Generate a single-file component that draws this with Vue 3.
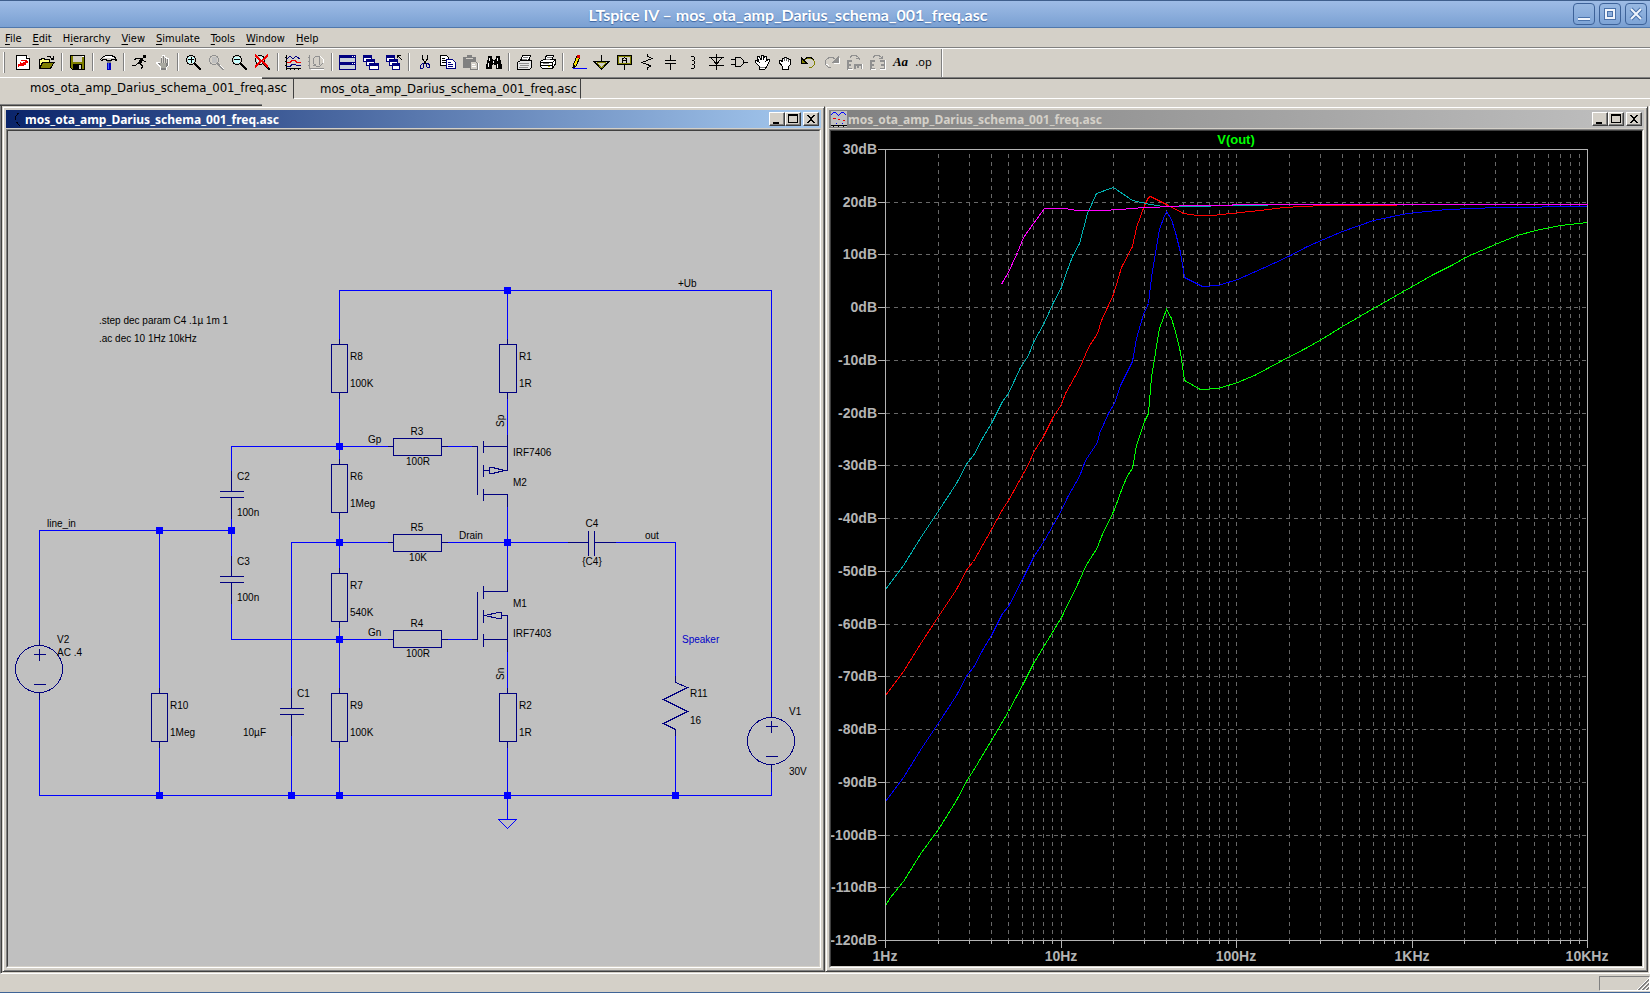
<template>
  <div class="app">
    <!-- Main window title -->
    <header class="titlebar">
      <h1 class="app-title">LTspice IV – mos_ota_amp_Darius_schema_001_freq.asc</h1>
      <div class="wm-buttons">
        <button v-for="b in wmButtons" :key="b.name" class="wm-btn" :aria-label="b.name">
          <svg viewBox="0 0 20 20" width="20" height="20">
            <path :d="b.d" class="wm-edge" />
            <path :d="b.d" class="wm-glyph" />
          </svg>
        </button>
      </div>
    </header>

    <!-- Menu -->
    <nav class="menubar">
      <button v-for="m in menus" :key="m.key + m.post" class="menu-item">{{ m.pre }}<u>{{ m.key }}</u>{{ m.post }}</button>
    </nav>

    <!-- Toolbar -->
    <div class="toolbar" role="toolbar">
      <span class="grip"></span>
      <div v-for="(group, gi) in toolGroups" :key="gi" class="tool-group">
        <button v-for="t in group" :key="t" class="tool" :aria-label="t">
          <span v-if="t === 'Text'" class="tool-text">Aa</span>
          <span v-else-if="t === 'SPICE directive'" class="tool-op">.op</span>
          <svg v-else viewBox="0 0 17 16" width="17" height="16" shape-rendering="crispEdges">
            <path
              v-for="(p, i) in icons[t]"
              :key="i"
              :d="p[0]"
              :fill="p[1] || 'none'"
              :stroke="p[2] || 'none'"
              :stroke-width="p[3] || 1"
            />
          </svg>
        </button>
      </div>
    </div>

    <!-- Document tabs -->
    <div class="tabs-edge"><span></span></div>
    <div class="tabs" role="tablist">
      <button
        v-for="(tab, i) in tabs"
        :key="i"
        class="tab"
        :class="{ active: i === activeTab }"
        role="tab"
        :aria-selected="i === activeTab"
        @click="activeTab = i"
      >
        {{ tab }}
      </button>
      <span class="tabs-rest"></span>
    </div>
    <div class="mdi-edge"><span></span></div>

    <!-- Child windows -->
    <main class="mdi">
      <section v-for="w in windows" :key="w.kind" class="child">
        <div class="child-title" :class="w.kind">
          <svg class="child-icon" viewBox="0 0 16 16" width="16" height="16" shape-rendering="crispEdges">
            <path
              v-for="(p, i) in icons[w.kind]"
              :key="i"
              :d="p[0]"
              :fill="p[1] || 'none'"
              :stroke="p[2] || 'none'"
            />
          </svg>
          <h2 class="child-name">{{ w.title }}</h2>
          <button v-for="b in childButtons" :key="b.name" class="child-btn" :class="b.name" :aria-label="b.name">
            <svg viewBox="0 0 12 10" width="12" height="10" shape-rendering="crispEdges">
              <path :d="b.d" />
            </svg>
          </button>
        </div>

        <div class="client">
          <!-- Schematic -->
          <svg v-if="w.kind === 'schematic'" class="canvas" viewBox="8 131 811 835" preserveAspectRatio="xMinYMin meet">
            <g transform="translate(0.5 0.5)" shape-rendering="crispEdges" fill="none">
              <path v-for="d in wires" :key="d" :d="d" class="wire" />
              <path v-for="d in symbols" :key="d" :d="d" class="symbol" />
              <rect
                v-for="(r, i) in resistors"
                :key="i"
                :x="r[0]"
                :y="r[1]"
                :width="r[2]"
                :height="r[3]"
                class="symbol"
              />
              <circle cx="38.5" cy="668.5" r="23.5" class="symbol" />
              <circle cx="770.5" cy="740.5" r="23.5" class="symbol" />
            </g>
            <rect
              v-for="(n, i) in nodes"
              :key="i"
              :x="n[0] - 3"
              :y="n[1] - 3"
              width="7"
              height="7"
              class="node"
            />
            <text v-for="(l, i) in labels" :key="i" :x="l[0]" :y="l[1]" class="label">{{ l[2] }}</text>
            <text v-for="(l, i) in centredLabels" :key="i" :x="l[0]" :y="l[1]" class="label mid">{{ l[2] }}</text>
            <text class="label" transform="translate(504 427) rotate(-90)">Sp</text>
            <text class="label" transform="translate(504 680) rotate(-90)">Sn</text>
            <text x="682" y="643" class="label comment">Speaker</text>
          </svg>

          <!-- Waveform plot -->
          <svg v-else class="canvas plot" viewBox="831 131 811 835" preserveAspectRatio="xMinYMin meet">
            <g transform="translate(0.5 0.5)" shape-rendering="crispEdges" fill="none">
              <path v-for="x in minorX" :key="'v' + x" :d="`M${x} 149V940`" class="grid vertical" />
              <path v-for="y in gridY" :key="'h' + y" :d="`M885 ${y}H1587`" class="grid" />
              <path v-for="x in minorX" :key="'t' + x" :d="`M${x} 940v3`" class="axis" />
              <path v-for="l in xLabels" :key="l.text" :d="`M${l.x} 940v7`" class="axis" />
              <path v-for="l in yLabels" :key="l.text" :d="`M877 ${l.y}h8`" class="axis" />
              <path d="M885 149H1587V940H885Z" class="axis" />
              <polyline v-for="t in traces" :key="t.color" :points="t.points" :stroke="t.color" />
            </g>
            <text v-for="l in yLabels" :key="l.text" x="877" :y="l.y + 5" class="tick end">{{ l.text }}</text>
            <text v-for="l in xLabels" :key="l.text" :x="l.x" y="961" class="tick mid">{{ l.text }}</text>
            <text x="1236" y="144" class="trace-name mid">V(out)</text>
          </svg>
        </div>
      </section>
    </main>

    <footer class="statusbar">
      <div class="status-pane">
        <svg viewBox="0 0 12 12" width="12" height="12">
          <path d="M0 12L12 0M4 12L12 4M8 12L12 8" stroke="#fff" fill="none" />
          <path d="M1 12L12 1M2 12L12 2M5 12L12 5M6 12L12 6M9 12L12 9M10 12L12 10" stroke="#808080" fill="none" />
        </svg>
      </div>
    </footer>
  </div>
</template>

<script setup>
import { ref } from 'vue'

const fileName = 'mos_ota_amp_Darius_schema_001_freq.asc'

const tabs = [fileName, fileName]
const activeTab = ref(0)

const windows = [
  { kind: 'schematic', title: fileName },
  { kind: 'waveform', title: fileName }
]

const wmButtons = [
  { name: 'Minimize', d: 'M4 15H16' },
  { name: 'Maximize', d: 'M6 6H14V14H6Z' },
  { name: 'Close', d: 'M5 5L15 15M15 5L5 15' }
]

const childButtons = [
  { name: 'minimize', d: 'M2 8h6v2h-6z' },
  { name: 'maximize', d: 'M1 0h10v9h-10zM2 2v6h8v-6z' },
  { name: 'close', d: 'M2 1h2v1h1v1h2v-1h1v-1h2v1h-1v1h-1v1h-1v2h1v1h1v1h1v1h-2v-1h-1v-1h-2v1h-1v1h-2v-1h1v-1h1v-1h1v-2h-1v-1h-1v-1h-1z' }
]

const menus = [
  { pre: '', key: 'F', post: 'ile' },
  { pre: '', key: 'E', post: 'dit' },
  { pre: 'H', key: 'i', post: 'erarchy' },
  { pre: '', key: 'V', post: 'iew' },
  { pre: '', key: 'S', post: 'imulate' },
  { pre: '', key: 'T', post: 'ools' },
  { pre: '', key: 'W', post: 'indow' },
  { pre: '', key: 'H', post: 'elp' }
]

const toolGroups = [
  ['New', 'Open'],
  ['Save'],
  ['Control panel'],
  ['Run', 'Halt'],
  ['Zoom in', 'Pan', 'Zoom out', 'Zoom full'],
  ['Autorange', 'Pick traces'],
  ['Tile', 'Cascade', 'Close all'],
  ['Cut', 'Copy', 'Paste', 'Find'],
  ['Print setup', 'Print'],
  ['Wire', 'Ground', 'Label net', 'Resistor', 'Capacitor', 'Inductor', 'Diode', 'Component',
    'Move', 'Drag', 'Undo', 'Redo', 'Rotate', 'Mirror', 'Text', 'SPICE directive']
]

const lens = 'M4 1h4v1h2v2h1v4h-1v2h-2v1h-4v-1h-2v-2h-1v-4h1v-2h2zM4 2v1h-1v1h-1v4h1v1h1v1h4v-1h1v-1h1v-4h-1v-1h-1v-1z'
const handle = 'M9 9h2v1h1v1h1v1h1v1h1v1h1v2h-2v-1h-1v-1h-1v-1h-1v-1h-1v-1h-1z'
const glass = 'M3 3h6v6h-6z'

// Each shape: [path, fill, stroke, stroke width]
const icons = {
  New: [
    ['M1.5 1.5H11.5L14.5 4.5V15.5H1.5Z', '#fff', '#000'],
    ['M11.5 1.5V4.5H14.5', '#fff', '#000'],
    ['M5 6h7v1h1v2h-2v2h-2v1h-5v1h-1v-3h2v-2h1v1h2v-1h2v-1h-3z', '#f00000']
  ],
  Open: [
    ['M1.5 14.5V5.5H3.5V4.5H6.5V5.5H11.5V8.5', '#ffff80', '#000'],
    ['M1.5 14.5L4.5 8.5H16L12.5 14.5Z', '#808000', '#000'],
    ['M8.5 2.5H12.5M12.5 3.5L15 5.5M15.5 2V5.5H12.5', null, '#000']
  ],
  Save: [
    ['M1.5 1.5H15.5V15.5H3.5L1.5 13.5Z', '#808000', '#000'],
    ['M4 2h9v6h-9z', '#d4d0c8'],
    ['M4 10h9v5h-9z', '#000'],
    ['M10 11h2v4h-2z', '#d4d0c8'],
    ['M13 2h2v1h-2z', '#fff']
  ],
  'Control panel': [
    ['M0.5 5.5L3.5 2.5L6.5 1.5H11.5L15.5 3.5L16.5 6.5L14.5 5.5H11.5V6.5H6.5V5.5L3.5 5.5L1.5 6.5Z', '#d4d0c8', '#000'],
    ['M5 2h7v1h2v1h-10v-1h1z', '#fff'],
    ['M7 7h4v2h-4z', '#808080'],
    ['M7 9h4v7h-4z', '#0000c0'],
    ['M8 9h1v6h-1z', '#4060ff']
  ],
  Run: [
    ['M12 1h3v3h-3z', '#000'],
    ['M12 4L8 9M11 5L6 4L3 6M11 6L15 8M8 9L12 12L10 15M8 8L5 11L1 11', null, '#000', 1],
    ['M9 5h3v2h-1v2h-2v1h-2v-2h1v-2h1z', '#000']
  ],
  Halt: [
    ['M6.5 16V13L2.5 9V8H4.5L6 9V3H8V1H10V3H12V4H14V12L12 14V16Z', '#808080', '#fff'],
    ['M6.5 3v6M8.5 2v7M10.5 3v6M12.5 5v4', null, '#d4d0c8'],
    ['M6 9h6v5h-5z', '#a8a8a0']
  ],
  'Zoom in': [[glass, '#c8ffff'], [lens, '#000'], [handle, '#000'], ['M3 5.5h6M6 3v6', null, '#000', 1]],
  Pan: [['M4 3h5v6h-5z', '#c0c0c0'], [lens, '#909090'], [handle, '#909090'], ['M12 11L16 15', null, '#fff']],
  'Zoom out': [[glass, '#c8ffff'], [lens, '#000'], [handle, '#000'], ['M3 5.5h6', null, '#000', 1]],
  'Zoom full': [[glass, '#c8ffff'], [lens, '#000'], [handle, '#000'], ['M1 1L14 13M14 1L1 13', null, '#f00000', 2]],
  Autorange: [
    ['M1.5 1V14.5H16M1.5 14.5V16M5.5 14v2M9.5 14v2M13.5 14v2M0 3.5h2M0 7.5h2M0 11.5h2', null, '#000'],
    ['M2 5L5 2L8 5L11 2L15 5', null, '#000080'],
    ['M2 8.5H5L7 6.5H10L12 8.5H16', null, '#f00000'],
    ['M2 12.5H5L7 10.5H10L12 11.5H16', null, '#000080']
  ],
  'Pick traces': [
    ['M1.5 1V14.5H16M4.5 14v2M8.5 14v2M12.5 14v2M0 3.5h2M0 7.5h2M0 11.5h2', null, '#909090'],
    ['M8 2H12L15 5V9L12 12H8L5 9V5ZM5 12L8 10M11 3V11', null, '#909090'],
    ['M2.5 15.5H16M12.5 2.5L15.5 5.5V9', null, '#fff']
  ],
  Tile: [
    ['M0 1h17v15h-17z', '#000080'],
    ['M1 4h15v4h-15zM1 11h15v4h-15z', '#c8d0d8'],
    ['M13 2h1v1h-1zM15 2h1v1h-1zM13 9h1v1h-1zM15 9h1v1h-1z', '#fff']
  ],
  Cascade: [
    ['M1 1h9v7h-9z', '#000080'], ['M2 4h7v3h-7z', '#fff'],
    ['M4 5h9v7h-9z', '#000080'], ['M5 8h7v3h-7z', '#fff'],
    ['M7 9h10v7h-10z', '#000080'], ['M8 12h8v3h-8z', '#fff']
  ],
  'Close all': [
    ['M1 1h9v7h-9z', '#000080'], ['M2 4h7v3h-7z', '#fff'],
    ['M4 5h9v7h-9z', '#000080'], ['M5 8h7v3h-7z', '#fff'],
    ['M7 9h8v7h-8z', '#000080'], ['M8 12h6v3h-6z', '#fff'],
    ['M12.5 4V1.5H16M13 2L17 6', null, '#000']
  ],
  Cut: [
    ['M6.5 1V5L10.5 10M11.5 1V5L7.5 10', null, '#000', 1],
    ['M4.5 11.5L6.5 9.5H7.5V13.5L6.5 14.5H4.5ZM10.5 9.5H12.5L13.5 11.5V13.5H11.5L10.5 12.5Z', null, '#000080', 1]
  ],
  Copy: [
    ['M1.5 1.5H7.5L9.5 3.5V11.5H1.5Z', '#fff', '#000'],
    ['M3 4.5h3M3 6.5h5M3 8.5h5', null, '#000'],
    ['M7.5 5.5H13.5L16 8V14.5H7.5Z', '#fff', '#000080'],
    ['M9 8.5h3M9 10.5h5M9 12.5h5', null, '#000080']
  ],
  Paste: [
    ['M1 3H5V1H10V3H14V14H1Z', '#808080'],
    ['M4 4h7v1h-7z', '#d4d0c8'],
    ['M8.5 7.5H13.5L15.5 9.5V15.5H8.5Z', '#d4d0c8', '#808080'],
    ['M10 10.5h3M10 12.5h4M16.5 9v7.5h-8', null, '#fff']
  ],
  Find: [
    ['M3 2h4v3h1v1h2v-1h1v-3h4v4h1v4h1v5h-6v-4h-2v-1h-1v1h-1v4h-6v-5h1v-4h1z', '#000'],
    ['M4 4h1v3h-1zM12 4h1v3h-1zM3 9h1v4h-1zM12 10h1v4h-1zM8 7h1v2h-1z', '#fff']
  ],
  'Print setup': [
    ['M4.5 7L6.5 1.5H14.5L12.5 7', '#fff', '#000'],
    ['M1.5 8.5L4.5 6.5H15.5V13.5L13.5 15.5H1.5Z', '#e8e8e8', '#000'],
    ['M3 9.5h10M4 11.5h9M3 13.5h9', null, '#909090'],
    ['M7 3.5h5M6 5.5h5', null, '#808080']
  ],
  Print: [
    ['M5.5 6L7.5 1.5H14.5L12.5 7', '#fff', '#000'],
    ['M1.5 7.5L4.5 5.5H16L16 10.5L13.5 14.5H3.5L1.5 12.5Z', '#fff', '#000'],
    ['M2 8.5H13.5L16 6M2 11.5H13V14M13.5 8V12', null, '#000'],
    ['M4 9.5h6M8 3.5h5M7 5.5h4', null, '#808080'],
    ['M9 12h2v1h-2z', '#c0c000']
  ],
  Wire: [
    ['M4 9L7 2L10 3L6 12L3 13Z', '#f8e000', '#000'],
    ['M7 1h3v3h-3z', '#e00000'],
    ['M3 11h2v3h-2z', '#000'],
    ['M3 14.5h14', null, '#0000ff']
  ],
  Ground: [
    ['M8.5 1V7', null, '#000'],
    ['M1 7.5H16L8.5 15Z', null, '#000'],
    ['M4 8.5H13M8.5 14L4 9M8.5 14L13 9', null, '#808000']
  ],
  'Label net': [
    ['M1.5 1.5H15.5V10.5H1.5Z', '#d4d0c8', '#000'],
    ['M2.5 2.5H14.5V9.5H2.5Z', null, '#808000'],
    ['M6.5 9V5L8.5 3.5L10.5 5V9M6.5 6.5H10.5M8.5 11V16', null, '#000']
  ],
  Resistor: [['M8.5 0V2L13 4.5L3 8.5L12 12L8.5 13.5V16', null, '#000']],
  Capacitor: [['M8.5 1V7M8.5 10V16', null, '#000'], ['M3 6h11v1h-11zM3 9h11v1h-11z', '#000']],
  Inductor: [['M6 2.5H8.5L9.5 3.5V5.5L8.5 6.5H6.5M8.5 6.5L9.5 7.5V9.5L8.5 10.5H6.5M8.5 10.5L9.5 11.5V13.5L8.5 14.5H6', null, '#000']],
  Diode: [['M8.5 0V16M1 3.5H16M3 4L8.5 10L14 4M1 11.5H16', null, '#000']],
  Component: [['M0 5.5H4M0 10.5H4M4.5 3.5H9.5L12.5 6.5V9.5L9.5 12.5H4.5ZM12.5 8.5H17', null, '#000']],
  Move: [
    ['M5 15V12L1 8L2 6L5 8L3 3L5 2L7 6V1H9V6L11 2L13 3L12 7L15 5L16 6L13 12L11 15Z', '#fff', '#000'],
    ['M6 13h5', null, '#808080']
  ],
  Drag: [
    ['M5 15V12L2 8V6H4L5 8V4H7V3H9V4H11V5H13V11L11 13V15Z', '#fff', '#000'],
    ['M7.5 4v3M9.5 4v3M11.5 5v3', null, '#606060']
  ],
  Undo: [
    ['M3.5 7L6.5 4.5H11.5L14.5 7.5V10.5L11.5 13.5H9', null, '#808000', 1],
    ['M4 6L7 3.5H11L14.5 6.5', null, '#000', 1],
    ['M1.5 4V9.5H7Z', '#808000', '#000']
  ],
  Redo: [
    ['M13 6L10 3.5H6L2.5 6.5V10L5.5 13.5H8', null, '#909090', 1],
    ['M15.5 3V8.5H10Z', '#909090', '#909090'],
    ['M3.5 10L6.5 12.5M16.5 4V9.5H11', null, '#fff']
  ],
  Rotate: [
    ['M6 6.5H1.5V14.5H6M2 10.5H5M8.5 15V10.5H15.5V15M12 11V14', null, '#909090', 2],
    ['M4 3.5L6 1.5H10L13 4V6M10 4.5H13.5', null, '#909090'],
    ['M2 15.5H7M16.5 10V15', null, '#fff']
  ],
  Mirror: [
    ['M6 6.5H1.5V14.5H6M2 10.5H5M11 6.5H15.5V14.5H11M15 10.5H12', null, '#909090', 2],
    ['M4 3.5L6 1.5H10L13 4M10 4.5H13.5V2', null, '#909090'],
    ['M2 15.5H7M11 15.5H16.5V6', null, '#fff']
  ],
  schematic: [['M10.5 2L7.5 5.5V8.5M8.5 11L12 15', null, '#000010']],
  waveform: [
    ['M0 0h16v16h-16z', '#c0c0c0'],
    ['M0 4L3 1H4L7 4H8L11 1H12L15 4', null, '#0000ff'],
    ['M2 7h3v1h-3zM7 8h2v1h-2zM12 9h2v1h-2z', '#f00000'],
    ['M5 12h1v1h-1zM11 12h1v1h-1z', '#0000ff'],
    ['M0 14.5h16M2.5 14v2M7.5 14v2M12.5 14v2', null, '#000']
  ]
}

// Schematic geometry
const wires = [
  'M339 338V290H771V711',
  'M507 290V338',
  'M339 398V458M339 518V567M339 627V687M339 747V795',
  'M231 470V446H387M447 446H471',
  'M39 639V530H231M159 530V687M159 747V795',
  'M231 518V555M231 603V639H387M447 639H471',
  'M291 687V542H387M447 542H567M291 735V795',
  'M507 398V434M507 506V579M507 651V687M507 747V819',
  'M615 542H675V675M675 735V795',
  'M39 699V795H771V771',
  'M498 819H516L507 828Z'
]

const symbols = [
  // resistor leads
  'M339 338V344M339 392V398M507 338V344M507 392V398',
  'M339 458V464M339 512V518M339 567V573M339 621V627',
  'M339 687V693M339 741V747M159 687V693M159 741V747M507 687V693M507 741V747',
  'M387 446H393M441 446H447M387 542H393M441 542H447M387 639H393M441 639H447',
  // capacitors
  'M231 470V491M219 491H243M219 497H243M231 497V518',
  'M231 555V576M219 576H243M219 582H243M231 582V603',
  'M291 687V708M279 708H303M279 714H303M291 714V735',
  'M567 542H588M588 530V555M594 530V555M594 542H615',
  // sources
  'M39 639V645M39 692V699M33 654H45M39 648V660M33 684H45',
  'M771 711V717M771 764V771M765 726H777M771 720V732M765 756H777',
  // R11
  'M675 675V682L687 687L663 699L687 711L663 723L675 729V735',
  // M2
  'M471 446H477V494M483 440V452M483 464V476M483 488V500',
  'M483 446H507M507 434V470H504M483 470H489M483 494H507V506',
  'M489 467H492L504 470L492 473H489Z',
  // M1
  'M471 639H477V591M483 585V598M483 609V622M483 633V646',
  'M483 591H507V579M483 639H507M507 651V615H501',
  'M501 612H498L484 615L498 618H501Z'
]

const resistors = [
  [331, 344, 16, 48],
  [331, 464, 16, 48],
  [331, 573, 16, 48],
  [331, 693, 16, 48],
  [151, 693, 16, 48],
  [499, 344, 17, 48],
  [499, 693, 17, 48],
  [393, 438, 48, 17],
  [393, 534, 48, 17],
  [393, 630, 48, 17]
]

const nodes = [
  [507, 290], [339, 446], [159, 530], [231, 530], [339, 542], [507, 542],
  [339, 639], [159, 795], [291, 795], [339, 795], [507, 795], [675, 795]
]

const labels = [
  [99, 324, '.step dec param C4 .1µ 1m 1'],
  [99, 342, '.ac dec 10 1Hz 10kHz'],
  [350, 360, 'R8'], [350, 387, '100K'],
  [350, 480, 'R6'], [350, 507, '1Meg'],
  [350, 589, 'R7'], [350, 616, '540K'],
  [350, 709, 'R9'], [350, 736, '100K'],
  [170, 709, 'R10'], [170, 736, '1Meg'],
  [519, 360, 'R1'], [519, 387, '1R'],
  [519, 709, 'R2'], [519, 736, '1R'],
  [237, 480, 'C2'], [237, 516, '100n'],
  [237, 565, 'C3'], [237, 601, '100n'],
  [297, 697, 'C1'], [243, 736, '10µF'],
  [47, 527, 'line_in'],
  [368, 443, 'Gp'], [368, 636, 'Gn'],
  [459, 539, 'Drain'], [645, 539, 'out'], [678, 287, '+Ub'],
  [513, 456, 'IRF7406'], [513, 486, 'M2'],
  [513, 607, 'M1'], [513, 637, 'IRF7403'],
  [690, 697, 'R11'], [690, 724, '16'],
  [789, 715, 'V1'], [789, 775, '30V'],
  [57, 643, 'V2'], [57, 656, 'AC .4']
]

const centredLabels = [
  [417, 435, 'R3'], [418, 465, '100R'],
  [417, 531, 'R5'], [418, 561, '10K'],
  [417, 627, 'R4'], [418, 657, '100R'],
  [592, 527, 'C4'], [592, 565, '{C4}']
]

// Plot axes: four decades across, 10dB per division down
const decade = 702 / 4
const minorX = []
for (let d = 0; d < 4; d++) {
  for (let n = 2; n <= 10; n++) {
    if (d === 3 && n === 10) break
    minorX.push(Math.round(885 + decade * (d + Math.log10(n))))
  }
}

const yLabels = []
for (let i = 0; i <= 15; i++) {
  yLabels.push({ y: Math.round(149 + (i * 791) / 15), text: `${30 - i * 10}dB` })
}
const gridY = yLabels.slice(1, 15).map(l => l.y)

const xLabels = ['1Hz', '10Hz', '100Hz', '1KHz', '10KHz'].map((text, i) => ({
  text,
  x: Math.round(885 + decade * i)
}))

const traces = [
  {
    color: '#00ff00',
    points: '885,905 890,897 903,881 921,852 938,829 956,800 967,779 973,770 991,740 1008,711 1023,683 1033,663 1044,645 1061,617 1079,580 1085,566 1097,547 1101,536 1114,509 1122,487 1127,475 1132,468 1136,445 1144,421 1148,413 1151,377 1155,352 1159,328 1166,309 1171,318 1175,331 1180,352 1184,380 1200,389 1218,388 1237,382 1254,375 1280,361 1305,348 1321,339 1342,326 1373,308 1403,291 1433,274 1453,264 1465,257 1497,243 1517,235 1535,230 1560,225 1587,222'
  },
  {
    color: '#0000ff',
    points: '885,801 903,777 921,748 939,721 956,695 967,674 973,667 982,650 991,635 1002,613 1008,606 1023,577 1033,557 1044,540 1062,508 1067,497 1079,476 1085,460 1097,442 1099,433 1108,413 1114,403 1120,385 1132,361 1136,338 1143,314 1148,303 1151,277 1155,253 1159,229 1163,218 1166,211 1171,219 1175,232 1180,252 1184,277 1202,286 1218,285 1237,279 1253,272 1273,263 1290,255 1305,247 1323,239 1342,231 1373,220 1407,213 1447,209 1497,207 1587,206'
  },
  {
    color: '#ff0000',
    points: '885,695 903,671 921,642 938,616 956,589 967,568 973,561 991,529 1002,509 1008,500 1023,473 1028,464 1033,452 1043,436 1053,416 1061,404 1065,393 1079,368 1088,347 1097,333 1101,320 1113,294 1121,267 1132,246 1136,227 1144,205 1148,197 1150,196 1166,204 1183,213 1197,215 1212,215 1240,212 1260,210 1283,207 1323,205 1393,205 1400,204 1587,204'
  },
  {
    color: '#00b0b0',
    points: '885,589 903,565 921,536 939,509 956,483 967,462 973,455 982,438 991,423 1002,401 1008,393 1020,367 1028,355 1033,342 1044,322 1053,302 1061,287 1066,272 1072,256 1079,243 1087,213 1096,193 1113,187 1132,200 1150,204 1163,206 1202,206 1220,205 1265,205 1270,204 1587,204'
  },
  {
    color: '#ff00ff',
    points: '1001,284 1003,280 1008,272 1011,265 1017,252 1023,237 1033,223 1044,208 1064,208 1077,210 1102,210 1120,209 1143,207 1177,206 1180,205 1231,205 1233,204 1587,204'
  }
]
</script>

<style>
body {
  margin: 0;
  background: #d4d0c8;
}
</style>

<style scoped>
.app {
  display: flex;
  flex-direction: column;
  box-sizing: border-box;
  height: 100vh;
  background: #d4d0c8;
  border-bottom: 1px solid #3f6496;
  font-family: "Noto Sans", "Liberation Sans", sans-serif;
  color: #000;
  overflow: hidden;
}

button {
  padding: 0;
  margin: 0;
  border: 0;
  background: none;
  color: inherit;
  font: inherit;
}

h1,
h2 {
  margin: 0;
}

/* Title bar */
.titlebar {
  display: flex;
  align-items: center;
  box-sizing: border-box;
  height: 28px;
  padding: 0 3px;
  flex: none;
  border-top: 1px solid #3f5f8c;
  border-bottom: 1px solid #5078ac;
  background: linear-gradient(#9ebce6, #7aa0d2);
}

.app-title {
  flex: 1;
  padding-top: 1px;
  text-align: center;
  font-family: Lato, "Noto Sans", sans-serif;
  font-size: 16px;
  line-height: 24px;
  font-weight: 700;
  color: #fff;
  text-shadow: 0 1px 1px #3c64a0;
}

.wm-buttons {
  display: flex;
  gap: 4px;
}

.wm-btn {
  display: flex;
  box-sizing: border-box;
  width: 22px;
  height: 22px;
  border: 1px solid #3d6299;
  border-radius: 4px;
  background: linear-gradient(#98b8e2, #7ea4d6);
}

.wm-edge,
.wm-glyph {
  fill: none;
  stroke: #4a72aa;
  stroke-width: 4;
}

.wm-glyph {
  stroke: #f0f5fc;
  stroke-width: 2;
}

/* Menu */
.menubar {
  display: flex;
  flex: none;
  height: 19px;
  border-bottom: 1px solid #808080;
}

.menu-item {
  padding: 0 6px 0 5px;
  font-family: "DejaVu Sans Condensed", Roboto, sans-serif;
  font-size: 11px;
  line-height: 22px;
}

.menu-item u {
  text-underline-offset: 2px;
}

/* Toolbar */
.toolbar {
  display: flex;
  align-items: center;
  flex: none;
  box-sizing: border-box;
  height: 29px;
  padding-bottom: 2px;
  border-top: 1px solid #fff;
}

.grip {
  width: 1px;
  height: 21px;
  margin: 0 7px 0 3px;
  border-right: 1px solid #808080;
  background: #fff;
}

.tool-group {
  display: flex;
  align-items: center;
}

.tool-group::after {
  content: "";
  width: 1px;
  height: 18px;
  margin: 0 3px;
  border-left: 1px solid #808080;
  background: #fff;
}

.tool-group:last-child::after {
  height: 28px;
  margin: 0 0 -2px 6px;
}

.tool {
  display: flex;
  align-items: center;
  justify-content: center;
  width: 23px;
  height: 22px;
}

.tool-text {
  font: italic bold 13px "Liberation Serif", serif;
}

.tool-op {
  font-size: 11px;
  line-height: 16px;
}

/* Tabs */
.tabs-edge {
  height: 2px;
  flex: none;
  box-sizing: border-box;
  border-top: 1px solid #808080;
  background: #404040;
}

.tabs-edge span,
.mdi-edge span {
  display: block;
  width: 262px;
  height: 2px;
}

.tabs-edge span {
  margin-top: -1px;
  background: linear-gradient(#fff 50%, #d4d0c8 50%);
}

.tabs {
  display: flex;
  flex: none;
  height: 20px;
}

.tab {
  box-sizing: border-box;
  padding: 0 3px 0 26px;
  border-right: 1px solid #404040;
  border-bottom: 1px solid #fff;
  font-family: "DejaVu Sans Condensed", "Noto Sans", sans-serif;
  font-size: 13px;
  line-height: 19px;
  white-space: nowrap;
}

.tab.active {
  padding: 0 6px 2px 30px;
  line-height: 17px;
  border-bottom-color: #d4d0c8;
}

.tabs-rest {
  flex: 1;
  border-bottom: 1px solid #fff;
}

/* MDI area */
.mdi-edge {
  flex: none;
  height: 2px;
  padding-top: 5px;
}

.mdi-edge span {
  background: linear-gradient(#808080 50%, #404040 50%);
}

.mdi {
  display: flex;
  flex: 1;
  min-height: 0;
  padding: 0 1px 1px;
  border-left: 1px solid #808080;
  border-right: 1px solid #fff;
  border-bottom: 1px solid #fff;
  box-shadow: inset 1px 0 #404040;
}

.child {
  display: flex;
  flex-direction: column;
  flex: 1;
  box-sizing: border-box;
  min-width: 0;
  padding: 3px;
  border: 1px solid;
  border-color: #d4d0c8 #404040 #404040 #d4d0c8;
  background: #d4d0c8;
  box-shadow: inset 1px 1px #fff, inset -1px -1px #808080;
}

.child-title {
  display: flex;
  align-items: center;
  flex: none;
  height: 18px;
  padding: 0 2px;
  margin-bottom: 1px;
  color: #fff;
  background: linear-gradient(90deg, #0a246a, #a6caf0);
}

.child-title.waveform {
  color: #d4d0c8;
  background: linear-gradient(90deg, #808080, #c0c0c0);
}

.child-name {
  flex: 1;
  padding: 1px 0 0 1px;
  font-size: 12px;
  line-height: 17px;
  font-weight: 700;
  white-space: nowrap;
  overflow: hidden;
}

.child-btn {
  display: flex;
  align-items: center;
  justify-content: center;
  box-sizing: border-box;
  width: 16px;
  height: 14px;
  border: 1px solid;
  border-color: #fff #404040 #404040 #fff;
  background: #d4d0c8;
  box-shadow: inset -1px -1px #808080;
}

.child-btn.close {
  margin-left: 2px;
}

.child-btn path {
  fill: #000;
  fill-rule: evenodd;
}

.client {
  flex: 1;
  min-height: 0;
  border: 1px solid;
  border-color: #808080 #fff #fff #808080;
  background: #d4d0c8;
}

.canvas {
  display: block;
  box-sizing: border-box;
  width: 100%;
  height: 100%;
  border: 1px solid;
  border-color: #404040 #d4d0c8 #d4d0c8 #404040;
  background: #c0c0c0;
}

.canvas.plot {
  background: #000;
}

/* Schematic */
.wire {
  stroke: #0000ff;
}

.symbol {
  stroke: #000080;
}

.node {
  fill: #0000ff;
}

.label {
  font-family: "Liberation Sans", Arial, sans-serif;
  font-size: 10px;
  fill: #000;
}

.label.comment {
  fill: #0000c8;
}

.mid {
  text-anchor: middle;
}

.end {
  text-anchor: end;
}

/* Plot */
.grid {
  stroke: #686868;
  stroke-dasharray: 4 4;
}

.grid.vertical {
  stroke-dashoffset: 4;
}

.axis {
  stroke: #b4b4b4;
}

.tick,
.trace-name {
  font-family: "Liberation Sans", Arial, sans-serif;
  font-size: 14px;
  font-weight: 700;
  fill: #b4b4b4;
}

.trace-name {
  font-size: 13px;
  fill: #00ff00;
}

/* Status bar */
.statusbar {
  display: flex;
  justify-content: flex-end;
  flex: none;
  box-sizing: border-box;
  height: 18px;
  padding: 2px 0 1px;
}

.status-pane {
  display: flex;
  align-items: flex-end;
  justify-content: flex-end;
  box-sizing: border-box;
  width: 51px;
  border: 1px solid;
  border-color: #808080 #fff #fff #808080;
}
</style>
